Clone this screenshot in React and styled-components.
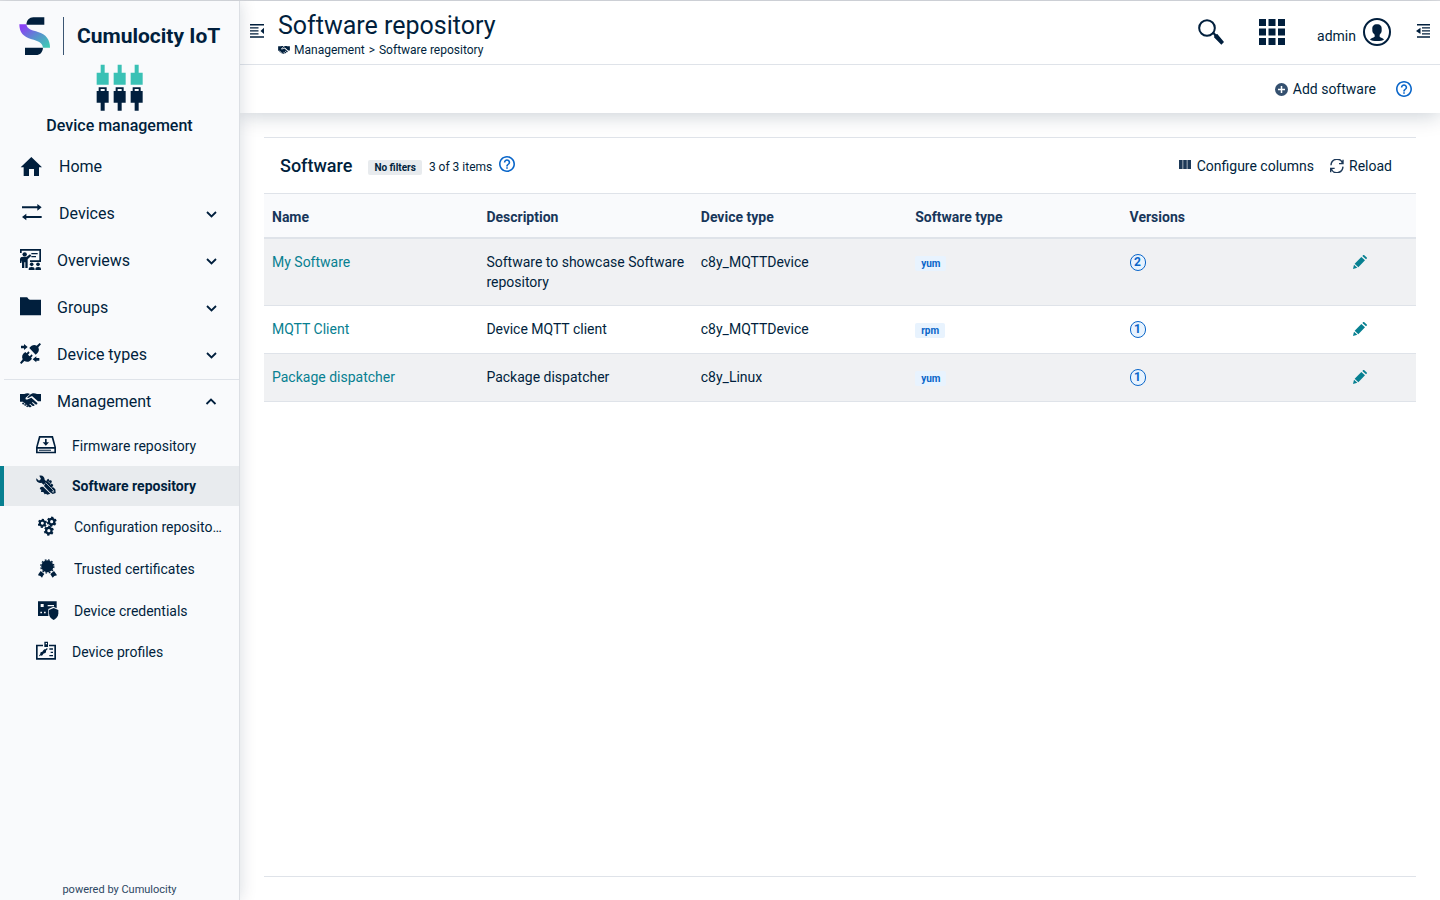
import styled, { createGlobalStyle } from 'styled-components';


const GlobalStyle = createGlobalStyle`
  * {
    box-sizing: border-box;
  }
  body {
    margin: 0;
    font-family: Roboto, "Open Sans", sans-serif;
    font-size: 14px;
    line-height: 20px;
    color: #011f3d;
    background: #fff;
  }
  button {
    font: inherit;
    color: inherit;
    border: none;
    background: none;
    padding: 0;
    cursor: pointer;
  }
  a {
    color: inherit;
    text-decoration: none;
  }
  svg {
    display: block;
    flex: none;
  }
`;

const Page = styled.div`
  display: flex;
  min-height: 100vh;
  border-top: 1px solid #e0e1e4;
`;

const Sidebar = styled.aside`
  display: flex;
  flex-direction: column;
  flex: none;
  width: 240px;
  background: #f9fafc;
  border-right: 1px solid #dcdfe4;
  box-shadow: 0 0 16px rgba(1, 31, 61, 0.16);
  z-index: 2;
`;

const Brand = styled.div`
  display: flex;
  align-items: center;
  gap: 13px;
  padding: 16px 0 0 19px;
`;

const BrandLine = styled.span`
  width: 1px;
  height: 38px;
  background: #3b5573;
`;

const BrandName = styled.span`
  font-size: 21px;
  line-height: 24px;
  font-weight: 700;
  white-space: nowrap;
`;

const AppTitle = styled.div`
  display: flex;
  flex-direction: column;
  align-items: center;
  gap: 5px;
  padding-top: 9px;
  font-size: 16px;
  line-height: 20px;
  font-weight: 500;
`;

const Nav = styled.nav`
  display: flex;
  flex-direction: column;
  flex: 1;
  padding-top: 8px;
`;

const NavItem = styled.button`
  display: flex;
  align-items: center;
  height: 47px;
  padding: 0 22px 0 20px;
  font-size: 16px;
  text-align: left;
  &:first-child {
    height: 46px;
  }
`;

const NavIcon = styled.span`
  flex: none;
  width: ${props => props.$width};
  padding-bottom: 2px;
`;

const NavLabel = styled.span`
  flex: 1;
`;

const Divider = styled.hr`
  width: 235px;
  height: 1px;
  margin: 1px 0 -2px 4px;
  border: none;
  background: #dfe3e9;
`;

const SubList = styled.div`
  padding-top: 1px;
`;

const SubItem = styled.a`
  display: flex;
  align-items: center;
  height: ${props => props.$tall ? '42px' : '40px'};
  padding: 0 16px 0 ${props => props.$tall ? '34px' : '32px'};
  border-left: 4px solid ${props => props.$active ? '#078091' : 'transparent'};
  background: ${props => props.$active ? '#e8ebee' : 'transparent'};
  font-weight: ${props => props.$active ? 700 : 400};
`;

const SubLabel = styled.span`
  flex: 1;
  overflow: hidden;
  text-overflow: ellipsis;
  white-space: nowrap;
`;

const Powered = styled.footer`
  font-size: 11px;
  text-align: center;
  color: #2c4763;
`;

const Main = styled.main`
  display: flex;
  flex-direction: column;
  flex: 1;
  min-width: 0;
`;

const Top = styled.header`
  box-shadow: 0 2px 20px rgba(1, 31, 61, 0.22);
`;

const TitleBar = styled.div`
  display: flex;
  align-items: center;
  height: 64px;
  padding: 0 10px;
  border-bottom: 1px solid #dfe3e9;
`;

const TitleBlock = styled.div`
  flex: 1;
  padding: 2px 0 0 14px;
`;

const Title = styled.h1`
  margin: 0;
  font-size: 25px;
  line-height: 32px;
  font-weight: 400;
`;

const Crumbs = styled.div`
  display: flex;
  align-items: center;
  gap: 4px;
  font-size: 12px;
  line-height: 16px;
`;

const HeaderTools = styled.div`
  display: flex;
  align-items: center;
  padding-bottom: 2px;
`;

const IconButton = styled.button`
  margin-right: ${props => props.$gap || 0};
  padding-bottom: ${props => props.$lift || 0};
  color: ${props => props.$color || 'inherit'};
`;

const UserButton = styled.button`
  display: flex;
  align-items: center;
  gap: 7px;
  margin-right: 25px;
`;

const UserName = styled.span`
  padding-top: 8px;
`;

const ActionBar = styled.div`
  display: flex;
  align-items: center;
  justify-content: flex-end;
  gap: 20px;
  height: 48px;
  padding-right: 28px;
  background: #fff;
`;

const TextButton = styled.button`
  display: flex;
  align-items: center;
  gap: 5px;
`;

const Card = styled.section`
  flex: 1;
  margin: 24px 24px 23px;
  border-top: 1px solid #dfe3e9;
  border-bottom: 1px solid #dfe3e9;
`;

const CardHead = styled.div`
  display: flex;
  align-items: center;
  justify-content: space-between;
  height: 56px;
  padding: 0 24px 0 16px;
  border-bottom: 1px solid #dfe3e9;
`;

const CardInfo = styled.div`
  display: flex;
  align-items: center;
  gap: 7px;
`;

const CardTitle = styled.h2`
  margin: 0 9px 0 0;
  font-size: 18px;
  line-height: 24px;
  font-weight: 500;
`;

const FilterTag = styled.span`
  margin-top: 3px;
  padding: 0 6px;
  border-radius: 2px;
  background: #e8ebee;
  font-size: 10px;
  line-height: 15px;
  font-weight: 700;
`;

const Count = styled.span`
  padding-top: 2px;
  font-size: 12px;
`;

const CardActions = styled.div`
  display: flex;
  gap: 16px;
`;

const Table = styled.table`
  width: 100%;
  table-layout: fixed;
  border-collapse: separate;
  border-spacing: 0;
`;

const Th = styled.th`
  width: ${props => props.$width};
  padding: 13px 8px 10px;
  border-bottom: 2px solid #dfe3e9;
  background: #f9fafc;
  color: #17365a;
  font-weight: 700;
  text-align: left;
`;

const Tr = styled.tr`
  &:nth-child(odd) {
    background: #f0f1f3;
  }
`;

const Td = styled.td`
  height: 48px;
  padding: 13px 8px;
  border-bottom: 1px solid #dfe3e9;
  vertical-align: top;
`;

const SoftwareLink = styled.a`
  color: #078091;
`;

const TypeTag = styled.span`
  display: inline-block;
  padding: 0 6px;
  border-radius: 2px;
  background: #e8f3fe;
  color: #0a66c9;
  font-size: 10px;
  line-height: 15px;
  font-weight: 700;
`;

const VersionBadge = styled.span`
  display: flex;
  align-items: center;
  justify-content: center;
  width: 16px;
  height: 17px;
  margin-top: 2px;
  border: 1px solid #0a66c9;
  border-radius: 8px;
  background: #e8f3fe;
  color: #0a66c9;
  font-size: 12px;
  line-height: 15px;
  font-weight: 700;
`;

const EditButton = styled.button`
  display: block;
  padding: 3px 9px;
  color: #078091;
`;


const Svg = ({ box, w, h, children }) => (
  <svg viewBox={box} width={w} height={h} fill="currentColor" aria-hidden="true">{children}</svg>
);

const LogoIcon = () => (
  <Svg box="57 50 93 114" w="31" h="38">
    <defs>
      <linearGradient id="logoFill" x1="0" y1="0" x2="1" y2="1">
        <stop offset="0.1" stopColor="#8a3ff5" />
        <stop offset="0.5" stopColor="#5b8bd0" />
        <stop offset="0.95" stopColor="#3fc9b5" />
      </linearGradient>
    </defs>
    <path d="M79 73C80 60 88 51 100 51H133V73Z" />
    <path d="M75 142H129C128 156 120 164 108 164H75Z" />
    <path fill="url(#logoFill)" d="M58 72H79C81 88 98 90 114 95C138 102 150 118 150 142H129C127 125 112 122 95 117C70 110 58 96 58 72Z" />
  </Svg>
);

const PlugsIcon = () => (
  <Svg box="289 192 144 141" w="48" h="47">
    {[0, 51, 102].map(x => (
      <g key={x} transform={`translate(${x} 0)`}>
        <path fill="#3ac1b5" d="M303 194H315V218H327V254H291V218H303Z" />
        <path fillRule="evenodd" d="M297 262H321V273H327V308H315V332H303V308H291V273H297ZM303 267V273H315V267Z" />
      </g>
    ))}
  </Svg>
);

const HomeIcon = () => (
  <Svg box="60 33 66 63" w="22" h="21">
    <path d="M62 67 94 36 126 67H117V93H102V72H87V93H71V67Z" />
  </Svg>
);

const ArrowsIcon = () => (
  <Svg box="60 171 66 63" w="22" h="21">
    <path d="M66 184H112V177L125 187 112 197V190H66ZM125 213H79V206L66 216 79 226V219H125Z" />
  </Svg>
);

const OverviewIcon = () => (
  <Svg box="60 312 63 63" w="21" h="21">
    <path d="M60 312H123V351H90V346H118V317H65V324H60Z" />
    <circle cx="74" cy="328" r="6.5" />
    <path d="M60 343C60 337 64 335 70 335H80L90 328 94 332 83 343V369H76V352H73V369H66V346L64 354H60Z" />
    <path d="M94 324H113V328H94ZM94 333H108V337H94Z" />
    <circle cx="95" cy="358" r="5.5" />
    <circle cx="114" cy="358" r="5.5" />
    <path d="M86 375C86 368 88 366 95 366S104 368 104 375ZM106 375C106 368 108 366 115 366S123 368 123 375Z" />
  </Svg>
);

const FolderIcon = () => (
  <Svg box="60 33 63 63" w="21" h="21">
    <path d="M60 37H80C84 37 84 44 90 44H123V91H60Z" />
  </Svg>
);

const DeviceTypesIcon = () => (
  <Svg box="60 173 63 63" w="21" h="21">
    <path d="M63 181H72V176L83 185 72 194V189H63ZM118 218H109V213L98 222 109 231V226H118Z" />
    <path d="M119 173 123 177 115 186C119 195 116 202 107 208L88 188C94 180 102 177 110 181Z" />
    <path d="M64 236 60 232 68 222C64 213 67 206 76 200L80 204 85 198 89 202 84 208 89 213 95 207 98 211 93 217 96 220C90 229 82 232 73 227Z" />
  </Svg>
);

const HandshakeIcon = ({ w, h }) => (
  <Svg box="60 324 63 43" w={w} h={h}>
    <path d="M60 326H73C79 323 86 323 90 326L77 337C75 342 79 344 84 342L94 337 112 353C113 357 109 359 106 357L98 350 96 352 104 359C103 363 100 363 97 361L90 355 88 357 95 363C92 367 89 366 86 364L69 349H60Z" />
    <path d="M123 326H111C105 323 97 322 92 327L82 336C82 339 86 338 90 335L96 332 114 348H123Z" />
    <path d="M69 351 73 354 70 358 66 355ZM75 355 79 358 76 362 72 359ZM81 360 85 363 82 366 78 363Z" />
  </Svg>
);

const Chevron = ({ up }) => (
  <svg viewBox="0 0 12 12" width="12" height="12" fill="none" stroke="currentColor" strokeWidth="1.8" aria-hidden="true">
    <path d={up ? 'M1.5 8 6 3.5 10.5 8' : 'M2 4 6.5 8.5 11 4'} />
  </svg>
);

const FirmwareIcon = () => (
  <Svg box="108 29 60 60" w="20" h="20">
    <path fillRule="evenodd" d="M117 32H159L168 66V84H108V66ZM121 37 113 65H163L155 37ZM113 70V79H163V70Z" />
    <path d="M135 41H140V51H147L137.500 61 128 51H135ZM117 73H153V76H117Z" />
  </Svg>
);

const ToolsIcon = () => (
  <Svg box="108 149 60 60" w="20" h="20">
    <path d="M118 151C126 148 134 153 134 163L140 169 131 178 124 172C115 175 107 168 109 159L117 166 123 161Z" />
    <path d="M141 163 145 160 149 166 153 164 156 170 153 173 160 179 158 184 166 192 167 203 158 206 149 200 132 182Z" />
    <path d="M129 184 151 205 142 208 138 205 134 207 130 200 123 200 124 193 119 191 122 185Z" />
    <g stroke="#e8ebee" strokeWidth="2" fill="none">
      <path d="M137 172 162 197M144 168 151 175M150 178 157 172M154 188 161 182" />
      <circle cx="159" cy="199" r="2" />
    </g>
  </Svg>
);

const gear = (cx, cy, r) => (
  <g key={cx} stroke="currentColor" fill="none">
    <circle cx={cx} cy={cy} r={r * 0.58} strokeWidth={r * 0.48} />
    {[0, 60, 120, 180, 240, 300].map(a => (
      <path key={a} strokeWidth={r * 0.5} d={`M${cx} ${cy - r * 0.7}V${cy - r * 1.06}`} transform={`rotate(${a + 8} ${cx} ${cy})`} />
    ))}
  </g>
);

const GearsIcon = () => (
  <Svg box="114 272 60 60" w="20" h="20">
    {gear(127, 294, 13)}
    {gear(155, 289, 14)}
    {gear(146.5, 316, 14)}
  </Svg>
);

const CertificateIcon = () => (
  <Svg box="114 53 63 63" w="21" h="21">
    <circle cx="142" cy="78" r="18" />
    <circle cx="142" cy="78" r="19.5" fill="none" stroke="currentColor" strokeWidth="4" strokeDasharray="5.1 5.1" />
    <path d="M122 92 133 101 129 106 126 112 121 107 114 105 116 100ZM162 92 151 101 154 106 158 112 163 107 171 105 168 100Z" />
  </Svg>
);

const CredentialsIcon = () => (
  <Svg box="114 183 63 63" w="21" h="21">
    <path fillRule="evenodd" d="M114 187H170V208L160 203 145 210V231H114ZM122 195V204H131V195ZM143 198V202H162V198ZM121 218V223H126V218ZM132 218V223H137V218Z" />
    <path d="M161 207 175 213V223C175 233 169 239 161 243 152 239 147 233 147 223V213Z" />
  </Svg>
);

const ProfilesIcon = () => (
  <Svg box="108 302 60 60" w="20" h="20">
    <path d="M108 313H129V318H113V353H163V318H147V313H168V358H108Z" />
    <path fillRule="evenodd" d="M133 304H144V320H133ZM137 308V312H141V308Z" />
    <path d="M141 323 143 326 138 331C139 337 136 339 132 339L129 342C128 346 125 347 122 345L119 348 117 346 121 341C120 336 123 334 127 334L130 330C132 326 135 326 137 327ZM148 324H159V328H148ZM152 334H159V338H152ZM148 344H159V348H148Z" />
  </Svg>
);

const FoldIcon = () => (
  <Svg box="0 0 14 14" w="14" h="14">
    <path d="M0 0H14V1.5H0ZM0 3.2H8.500V4.600H0ZM0 6.200H8.500V7.600H0ZM0 9.200H8.500V10.600H0ZM0 12.300H14V13.800H0ZM14 3.700V10.100L10.500 6.900Z" />
  </Svg>
);

const OutdentIcon = () => (
  <Svg box="0 0 14 14" w="14" h="14">
    <path d="M1 0H14V1.5H1ZM6 3.2H14V4.600H6ZM6 6.200H14V7.600H6ZM6 9.200H14V10.600H6ZM1 12.300H14V13.800H1ZM4.500 3.700V10.100L0 6.900Z" />
  </Svg>
);

const SearchIcon = () => (
  <Svg box="51 57 78 78" w="26" h="26">
    <circle cx="78" cy="84" r="23.5" fill="none" stroke="currentColor" strokeWidth="6" />
    <path d="M94 99 99 95 105 103 109 102 129 126 121 134 99 112 100 108Z" />
  </Svg>
);

const GridIcon = () => (
  <Svg box="0 0 26 26" w="26" h="26">
    {[0, 9.5, 19].map(y => [0, 9.5, 19].map(x => (
      <rect key={`${x}-${y}`} x={x} y={y} width="7" height="7" />
    )))}
  </Svg>
);

const UserIcon = () => (
  <Svg box="550 55 84 84" w="28" h="28">
    <circle cx="592" cy="97" r="39" fill="none" stroke="currentColor" strokeWidth="6" />
    <path d="M592 74C602 74 607 80 606 89C607 97 604 101 600 105V111C603 115 611 114 613 120C607 125 577 125 571 120C573 114 581 115 585 111V105C580 101 577 97 578 89C577 80 582 74 592 74Z" />
  </Svg>
);

const PlusIcon = () => (
  <Svg box="0 0 13 13" w="13" h="13">
    <circle cx="6.5" cy="6.5" r="6.5" fill="#34506f" />
    <path d="M6.5 3V10M3 6.5H10" stroke="#fff" strokeWidth="1.5" />
  </Svg>
);

const HelpIcon = () => (
  <Svg box="2 2 20 20" w="16" h="16">
    <path d="M11 18h2v-2h-2v2zm1-16C6.48 2 2 6.48 2 12s4.48 10 10 10 10-4.48 10-10S17.52 2 12 2zm0 18c-4.41 0-8-3.59-8-8s3.59-8 8-8 8 3.59 8 8-3.59 8-8 8zm0-14c-2.21 0-4 1.79-4 4h2c0-1.1.9-2 2-2s2 .9 2 2c0 2-3 1.750-3 5h2c0-2.250 3-2.500 3-5 0-2.210-1.790-4-4-4z" />
  </Svg>
);

const ColumnsIcon = () => (
  <Svg box="0 0 13 14" w="13" h="14">
    <path fill="#1d3958" d="M0 1H3.6V10H0ZM4.200 1H7.800V10H4.200ZM8.400 1H12V10H8.400Z" />
  </Svg>
);

const ReloadIcon = () => (
  <svg viewBox="662 87 42 42" width="14" height="14" fill="none" stroke="#1d3958" strokeWidth="4.2" aria-hidden="true">
    <path d="M665 106C666 84 694 82 699 99M701 89V101H689M701 110C699 132 671 134 666 116M664 127V115H676" />
  </svg>
);

const PencilIcon = () => (
  <Svg box="729 375 42 42" w="14" h="14">
    <path d="M754 381 765 391 745 412 734 401ZM757 378 761 374 772 384 768 388ZM732 404 742 413 729 417Z" />
  </Svg>
);


const sections = [
  { name: 'Home', Icon: HomeIcon, labelAt: '39px', link: true },
  { name: 'Devices', Icon: ArrowsIcon, labelAt: '39px' },
  { name: 'Overviews', Icon: OverviewIcon, labelAt: '37px' },
  { name: 'Groups', Icon: FolderIcon, labelAt: '37px' },
  { name: 'Device types', Icon: DeviceTypesIcon, labelAt: '37px' },
];

const subItems = [
  { name: 'Firmware repository', Icon: FirmwareIcon },
  { name: 'Software repository', Icon: ToolsIcon, active: true },
  { name: 'Configuration repository', Icon: GearsIcon, tall: true },
  { name: 'Trusted certificates', Icon: CertificateIcon, tall: true },
  { name: 'Device credentials', Icon: CredentialsIcon, tall: true },
  { name: 'Device profiles', Icon: ProfilesIcon },
];

const columns = [
  { name: 'Name', data: 'name', render: row => <SoftwareLink href="#">{row.name}</SoftwareLink> },
  { name: 'Description', data: 'description' },
  { name: 'Device type', data: 'deviceType' },
  { name: 'Software type', data: 'type', render: row => <TypeTag>{row.type}</TypeTag> },
  { name: 'Versions', data: 'versions', render: row => <VersionBadge>{row.versions}</VersionBadge> },
  {
    name: '', data: 'edit', width: '80px', render: row => (
      <EditButton aria-label={`Edit ${row.name}`}><PencilIcon /></EditButton>
    )
  },
];

const software = [
  { name: 'My Software', description: 'Software to showcase Software repository', deviceType: 'c8y_MQTTDevice', type: 'yum', versions: 2 },
  { name: 'MQTT Client', description: 'Device MQTT client', deviceType: 'c8y_MQTTDevice', type: 'rpm', versions: 1 },
  { name: 'Package dispatcher', description: 'Package dispatcher', deviceType: 'c8y_Linux', type: 'yum', versions: 1 },
];


const Navigator = () => (
  <Sidebar>
    <Brand>
      <LogoIcon />
      <BrandLine />
      <BrandName>Cumulocity IoT</BrandName>
    </Brand>
    <AppTitle>
      <PlugsIcon />
      Device management
    </AppTitle>
    <Nav>
      {sections.map(({ name, Icon, labelAt, link }) => (
        <NavItem key={name} as={link ? 'a' : 'button'} href={link ? '#' : undefined}>
          <NavIcon $width={labelAt}><Icon /></NavIcon>
          <NavLabel>{name}</NavLabel>
          {!link && <Chevron />}
        </NavItem>
      ))}
      <Divider />
      <NavItem aria-expanded="true">
        <NavIcon $width="37px"><HandshakeIcon w="21" h="15" /></NavIcon>
        <NavLabel>Management</NavLabel>
        <Chevron up />
      </NavItem>
      <SubList>
        {subItems.map(({ name, Icon, tall, active }) => (
          <SubItem key={name} href="#" $tall={tall} $active={active}>
            <NavIcon $width="36px"><Icon /></NavIcon>
            <SubLabel>{name}</SubLabel>
          </SubItem>
        ))}
      </SubList>
    </Nav>
    <Powered>powered by Cumulocity</Powered>
  </Sidebar>
);

const Header = () => (
  <Top>
    <TitleBar>
      <IconButton aria-label="Toggle navigation" $lift="4px"><FoldIcon /></IconButton>
      <TitleBlock>
        <Title>Software repository</Title>
        <Crumbs>
          <HandshakeIcon w="12" h="8" />
          <a href="#">Management</a>
          <span>&gt;</span>
          <a href="#">Software repository</a>
        </Crumbs>
      </TitleBlock>
      <HeaderTools>
        <IconButton aria-label="Search" $gap="35px"><SearchIcon /></IconButton>
        <IconButton aria-label="Applications" $gap="32px"><GridIcon /></IconButton>
        <UserButton>
          <UserName>admin</UserName>
          <UserIcon />
        </UserButton>
        <IconButton aria-label="Toggle drawer" $lift="2px"><OutdentIcon /></IconButton>
      </HeaderTools>
    </TitleBar>
    <ActionBar>
      <TextButton><PlusIcon />Add software</TextButton>
      <IconButton aria-label="Help" $color="#0a66c9"><HelpIcon /></IconButton>
    </ActionBar>
  </Top>
);

const SoftwareTable = ({ list }) => (
  <Table>
    <thead>
      <tr>
        {columns.map(item => <Th key={item.data} $width={item.width}>{item.name}</Th>)}
      </tr>
    </thead>
    <tbody>
      {list.map(row => (
        <Tr key={row.name}>
          {columns.map(item => <Td key={item.data}>{item.render ? item.render(row) : row[item.data]}</Td>)}
        </Tr>
      ))}
    </tbody>
  </Table>
);

const App = () => (
  <>
    <GlobalStyle />
    <Page>
      <Navigator />
      <Main>
        <Header />
        <Card>
          <CardHead>
            <CardInfo>
              <CardTitle>Software</CardTitle>
              <FilterTag>No filters</FilterTag>
              <Count>{software.length} of {software.length} items</Count>
              <IconButton aria-label="Help" $color="#0a66c9" $lift="4px"><HelpIcon /></IconButton>
            </CardInfo>
            <CardActions>
              <TextButton><ColumnsIcon />Configure columns</TextButton>
              <TextButton><ReloadIcon />Reload</TextButton>
            </CardActions>
          </CardHead>
          <SoftwareTable list={software} />
        </Card>
      </Main>
    </Page>
  </>
);

export default App;
